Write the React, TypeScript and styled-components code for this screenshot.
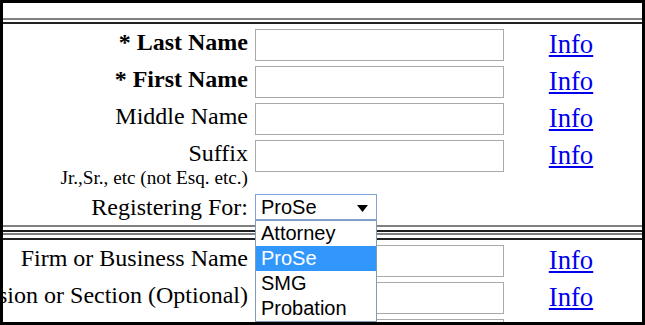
import React from 'react';
import styled, { createGlobalStyle } from 'styled-components';

const GlobalStyle = createGlobalStyle`
	html, body {
		margin: 0;
		padding: 0;
		background: #fff;
	}
	body {
		font-family: "Liberation Serif", "Times New Roman", serif;
		color: #000;
	}
`;

const Frame = styled.div`
	width: 645px;
	height: 325px;
	box-sizing: border-box;
	border: 3px solid #000;
	padding-top: 15px;
	overflow: hidden;
	background: #fff;
`;

const Rule = styled.div<{ $gap?: number }>`
	height: ${(p) => p.$gap ?? 2}px;
	border-top: 2px solid #808080;
	border-bottom: 2px solid #222;
`;

const RuleStack = styled.div`
	display: flex;
	flex-direction: column;
	gap: 1px;
`;

const FormTable = styled.div`
	display: grid;
	grid-template-columns: 252px 249px 1fr;
	row-gap: 5px;
	align-items: start;
	padding: 5px 0;
`;

const Label = styled.div<{ $bold?: boolean }>`
	min-width: 0;
	display: flex;
	flex-direction: column;
	align-items: flex-end;
	padding-right: 7px;
	font-size: 24px;
	line-height: 26px;
	font-weight: ${(p) => (p.$bold ? 700 : 400)};
	white-space: nowrap;
`;

const Hint = styled.span`
	font-size: 19.2px;
	line-height: 23px;
`;

const TextBox = styled.input`
	display: block;
	width: 249px;
	height: 32px;
	box-sizing: border-box;
	margin: 0;
	padding: 0 4px;
	border: 1px solid #a9a9a9;
	background: #fff;
	font: 16px "Liberation Sans", Arial, sans-serif;
`;

const InfoCell = styled.div`
	display: flex;
	justify-content: center;
	padding-right: 4px;
`;

const InfoLink = styled.a`
	font-size: 26.67px;
	line-height: 30px;
	color: #0000ee;
	text-decoration: underline;
`;

const SelectWrap = styled.div`
	position: relative;
	width: 122px;
	font-family: "Liberation Sans", Arial, sans-serif;
	font-size: 20px;
`;

const SelectBox = styled.div`
	height: 26px;
	box-sizing: border-box;
	border: 1px solid #7ea2da;
	padding: 0 8px 0 5px;
	display: flex;
	align-items: center;
	justify-content: space-between;
	line-height: 24px;
	background: #fff;

	svg {
		margin-top: 3px;
	}
`;

const OptionList = styled.ul`
	position: absolute;
	top: 100%;
	left: 0;
	z-index: 2;
	width: 122px;
	box-sizing: border-box;
	margin: 0;
	padding: 0;
	list-style: none;
	border: 1px solid #7f9db9;
	background: #fff;
`;

const OptionItem = styled.li<{ $active?: boolean }>`
	height: 25px;
	line-height: 25px;
	padding-left: 5px;
	background: ${(p) => (p.$active ? '#3297fd' : '#fff')};
	color: ${(p) => (p.$active ? '#fff' : '#000')};
`;

type FieldProps = {
	label?: string;
	bold?: boolean;
	hint?: string;
	info?: boolean;
};

const Field = ({ label, bold, hint, info = true }: FieldProps) => (
	<>
		<Label $bold={bold}>
			{label && <span>{label}</span>}
			{hint && <Hint>{hint}</Hint>}
		</Label>
		<TextBox type='text' />
		<InfoCell>{info && <InfoLink href='#'>Info</InfoLink>}</InfoCell>
	</>
);

const options = ['Attorney', 'ProSe', 'SMG', 'Probation'];

const RegisterSelect = () => (
	<SelectWrap>
		<SelectBox>
			<span>ProSe</span>
			<svg width='11' height='7' viewBox='0 0 11 7'>
				<polygon points='0,0 11,0 5.5,7' fill='#000' />
			</svg>
		</SelectBox>
		<OptionList>
			{options.map((o) => (
				<OptionItem key={o} $active={o === 'ProSe'}>
					{o}
				</OptionItem>
			))}
		</OptionList>
	</SelectWrap>
);

const App = () => {
	return (
		<>
			<GlobalStyle />
			<Frame>
				<Rule />
				<FormTable>
					<Field label='* Last Name' bold />
					<Field label='* First Name' bold />
					<Field label='Middle Name' />
					<Field label='Suffix' hint='Jr.,Sr., etc (not Esq. etc.)' />
					<Label>
						<span>Registering For:</span>
					</Label>
					<RegisterSelect />
					<div />
				</FormTable>
				<RuleStack>
					<Rule $gap={3} />
					<Rule $gap={3} />
				</RuleStack>
				<FormTable>
					<Field label='Firm or Business Name' />
					<Field label='Division or Section (Optional)' />
					{/* next row only shows its input's top edge in view */}
					<Field info={false} />
				</FormTable>
			</Frame>
		</>
	);
};

export default App;
